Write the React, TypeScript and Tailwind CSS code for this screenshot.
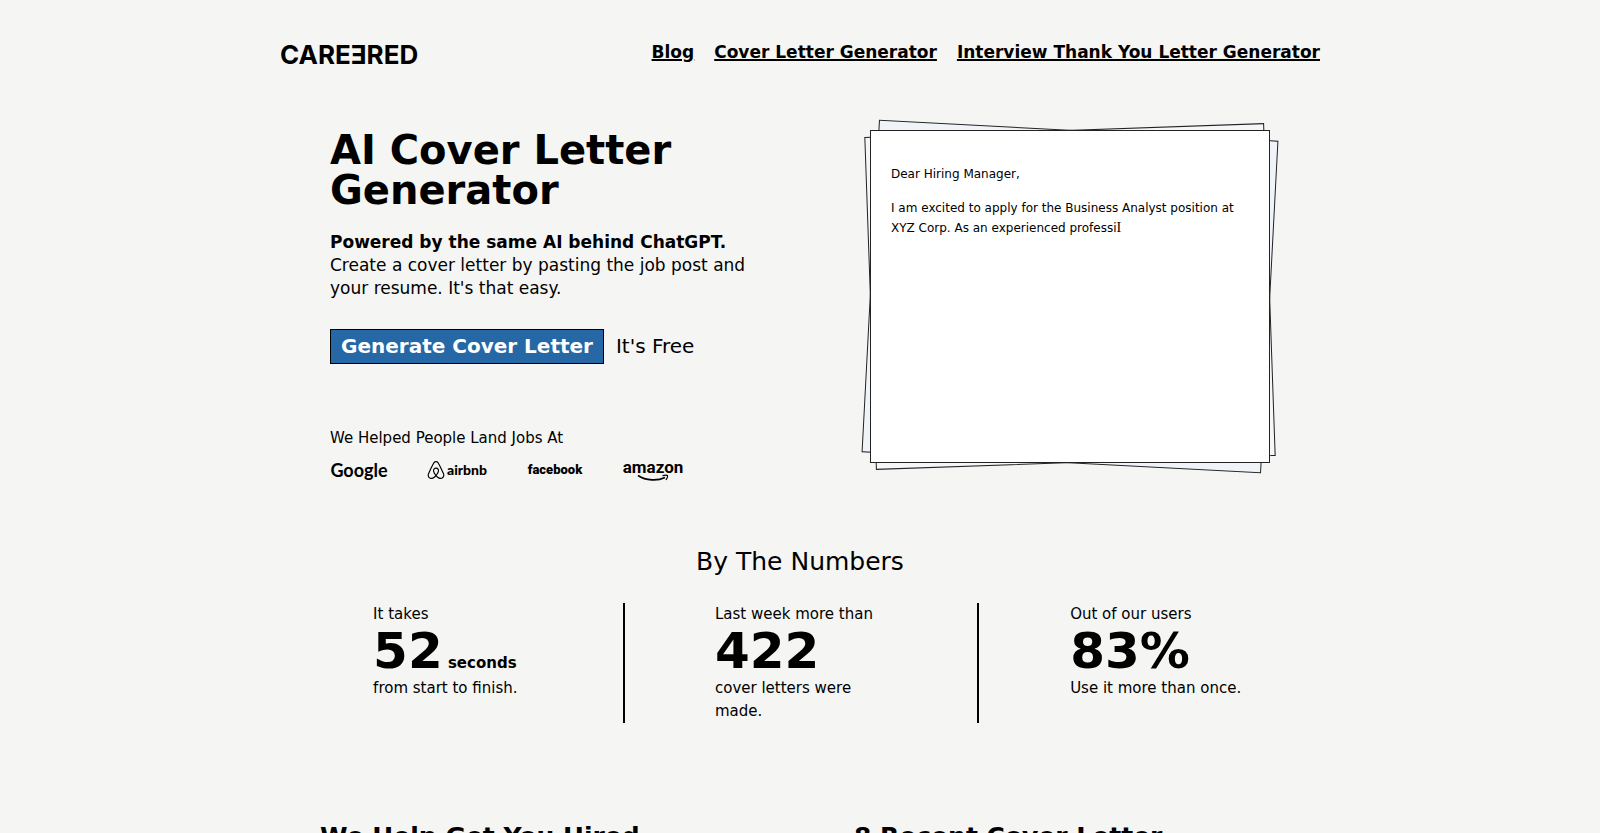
import { SiAirbnb } from 'react-icons/si';

const navLinks = ['Blog', 'Cover Letter Generator', 'Interview Thank You Letter Generator'];

function Header() {
  return (
    <header className="flex items-start justify-between pt-10">
      <a href="/" className="font-['Inter',sans-serif] text-[26px] leading-[30px] font-bold">
        CAREƎRED
      </a>
      <nav className="flex gap-5 text-[17px] leading-6 font-bold">
        {navLinks.map((label) => (
          <a key={label} href="#" className="underline decoration-2">
            {label}
          </a>
        ))}
      </nav>
    </header>
  );
}

function AmazonLogo() {
  return (
    <span className="flex flex-col items-center font-['Roboto',sans-serif] text-[17px] leading-4 font-bold">
      amazon
      <svg viewBox="0 0 32 8" className="-mt-px h-2 w-8" fill="none" stroke="currentColor">
        <path d="M1 1.500C9 7 21 7 28 3.500" strokeWidth="1.600" />
        <path d="M25.500 1.700C28 1.100 30 1 30.500 1.700 30.800 2.500 30 4.500 29 6" strokeWidth="1.200" />
      </svg>
    </span>
  );
}

function Companies() {
  return (
    <div>
      <p className="text-[15px] leading-6">We Helped People Land Jobs At</p>
      <div className="mt-2 grid h-6 w-fit grid-cols-[repeat(4,58px)] items-center justify-items-center gap-10">
        <span className="font-['Lato',sans-serif] text-lg leading-5 font-bold">Google</span>
        <span className="flex items-center gap-0.5 font-['Lato',sans-serif] text-sm leading-5 font-black">
          <SiAirbnb className="size-[18px] shrink-0" />
          airbnb
        </span>
        <span className="font-['Roboto',sans-serif] text-[13px] leading-5 font-black">facebook</span>
        <AmazonLogo />
      </div>
    </div>
  );
}

function Letter() {
  return (
    <div className="relative h-[333px] w-[400px] shrink-0">
      <div className="absolute inset-0 rotate-3 border border-[#222] bg-[#f0f4f8]" />
      <div className="absolute inset-0 -rotate-2 border border-[#222] bg-[#f4f6f8]" />
      <div className="relative h-full border border-[#222] bg-white px-5 pt-[33px] text-xs leading-5">
        <p>Dear Hiring Manager,</p>
        <p className="mt-3.5">
          I am excited to apply for the Business Analyst position at XYZ Corp. As an experienced professi
          <span className="font-['Liberation_Serif',serif] text-sm leading-4">I</span>
        </p>
      </div>
    </div>
  );
}

function Hero() {
  return (
    <section className="mt-15 flex items-start justify-between px-[50px]">
      <div className="w-[440px]">
        <h1 className="text-[40px] leading-10 font-bold">AI Cover Letter Generator</h1>
        <p className="mt-[21px] text-[17px] leading-[23px]">
          <strong>Powered by the same AI behind ChatGPT.</strong>
          <br />
          Create a cover letter by pasting the job post and your resume. It's that easy.
        </p>
        <div className="mt-[29px] mb-[62px] flex items-baseline gap-3 text-xl">
          <button className="border border-black bg-[#2568a5] px-2.5 py-px leading-[31px] font-bold text-white">
            Generate Cover Letter
          </button>
          <span>It's Free</span>
        </div>
        <Companies />
      </div>
      <Letter />
    </section>
  );
}

const stats = [
  { before: 'It takes', value: '52', unit: 'seconds', after: 'from start to finish.' },
  { before: 'Last week more than', value: '422', unit: '', after: 'cover letters were made.' },
  { before: 'Out of our users', value: '83%', unit: '', after: 'Use it more than once.' },
];

function Numbers() {
  return (
    <section className="mt-16">
      <h2 className="text-center text-[25px] leading-8">By The Numbers</h2>
      <div className="-mx-3 mt-[25px] grid grid-cols-3">
        {stats.map((stat) => (
          <div key={stat.value} className="flex min-h-[120px] justify-center border-black not-first:border-l-2">
            <div className="max-w-[172px] text-[15px] leading-[23px]">
              <p>{stat.before}</p>
              <p className="font-bold">
                <span className="text-[50px] leading-[51px]">{stat.value}</span> {stat.unit}
              </p>
              <p>{stat.after}</p>
            </div>
          </div>
        ))}
      </div>
    </section>
  );
}

export default function App() {
  return (
    <div className="h-screen overflow-hidden bg-[#f5f5f3] font-['DejaVu_Sans',sans-serif] text-black">
      <div className="mx-auto max-w-[1040px]">
        <Header />
        <main>
          <Hero />
          <Numbers />
          <section className="mt-[98px] grid grid-cols-2 gap-[68px] pl-10 text-[25px] leading-8 font-bold">
            <h2>We Help Get You Hired</h2>
            <h2>8 Recent Cover Letter</h2>
          </section>
        </main>
      </div>
    </div>
  );
}
